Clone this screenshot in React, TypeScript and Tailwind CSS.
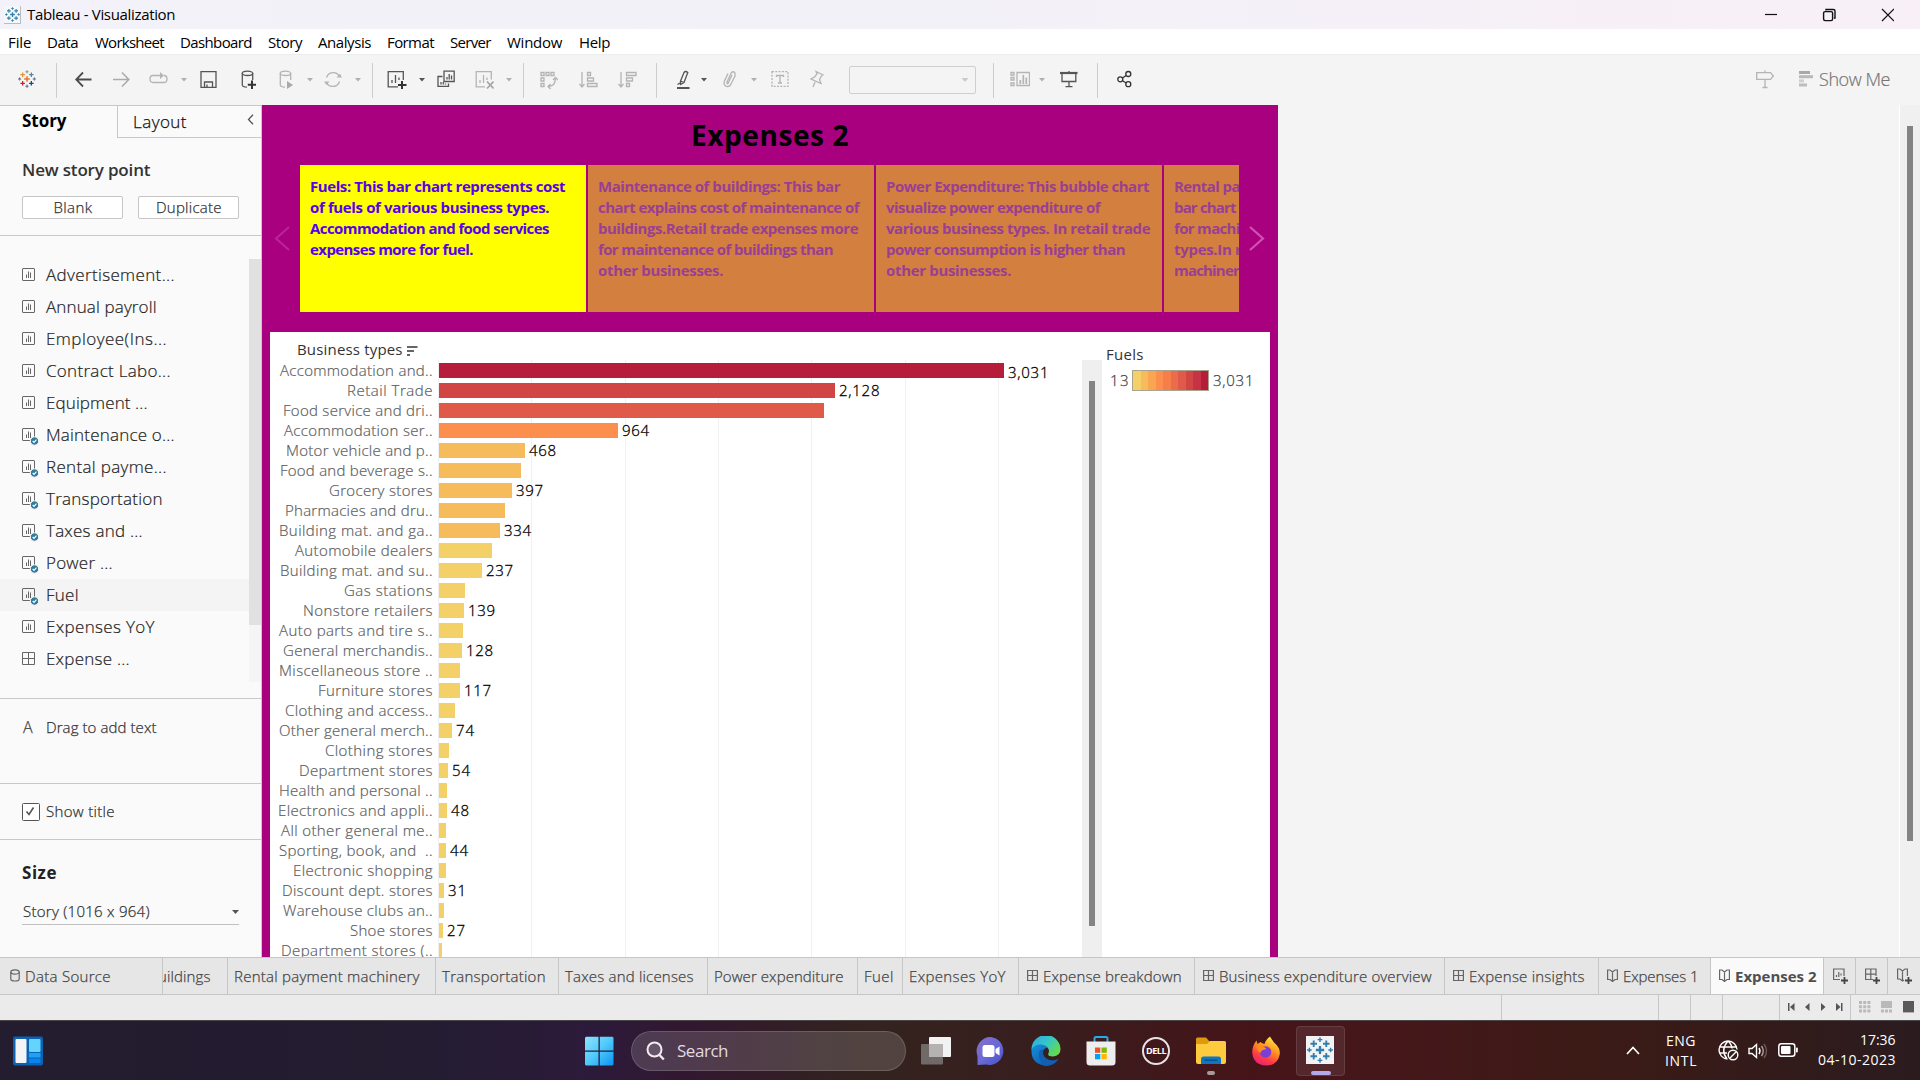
import { useLayoutEffect, useRef, useState } from 'react';
import type { ReactNode } from 'react';

/** Single line of text whose tracking is tuned so that it spans `w` pixels. */
function Fit({ w, children, className = '' }: { w: number; children: string; className?: string }) {
  const ref = useRef<HTMLSpanElement>(null);
  const [spacing, setSpacing] = useState<number | null>(null);
  useLayoutEffect(() => {
    if (ref.current && spacing === null) {
      const natural = ref.current.getBoundingClientRect().width;
      setSpacing((w + 0.5 - natural) / Math.max(1, children.length - 1));
    }
  }, [w, children, spacing]);
  return (
    <span
      ref={ref}
      className={`inline-block shrink-0 whitespace-pre ${className}`}
      style={spacing === null ? undefined : { letterSpacing: `${spacing}px`, marginRight: `${-spacing - 0.5}px` }}
    >
      {children}
    </span>
  );
}

function Ic({ w, c = '#b4b4b4', className = '', children }: { w: number; c?: string; className?: string; children: ReactNode }) {
  return (
    <svg width={w} height={25} viewBox={`0 0 ${w} 25`} fill="none" stroke={c} strokeWidth={1.3} className={`shrink-0 ${className}`}>
      {children}
    </svg>
  );
}

const Sep = ({ className }: { className: string }) => <div className={`h-[35px] w-px shrink-0 bg-[#cccccc] ${className}`} />;

function Caret({ className = '', dark = false }: { className?: string; dark?: boolean }) {
  return (
    <Ic w={6} className={className}>
      <path d="M0 11H6L3 14.5Z" fill={dark ? '#555' : '#b0b0b0'} stroke="none" />
    </Ic>
  );
}

const plus = (x: number, y: number, r: number) => `M${x - r} ${y}H${x + r}M${x} ${y - r}V${y + r}`;

function TableauMark({ mono = false }: { mono?: boolean }) {
  const k = (c: string) => (mono ? '#2f7fae' : c);
  return (
    <g fill="none" strokeWidth={1.7}>
      <path d={plus(12, 12, 3.8)} stroke={k('#e8762c')} strokeWidth={2.1} />
      <path d={plus(6.2, 6.2, 3)} stroke={k('#eb912b')} />
      <path d={plus(17.8, 6.2, 3)} stroke={k('#59879b')} />
      <path d={plus(6.2, 17.8, 3)} stroke={k('#c72035')} />
      <path d={plus(17.8, 17.8, 3)} stroke={k('#1f447e')} />
      <path d={plus(12, 2.4, 2.2)} stroke={k('#7199a6')} strokeWidth={1.3} />
      <path d={plus(12, 21.6, 2.2)} stroke={k('#5b6591')} strokeWidth={1.3} />
      <path d={plus(2.2, 12, 2.1)} stroke={k('#5c6692')} strokeWidth={1.3} />
      <path d={plus(21.8, 12, 2.1)} stroke={k('#5c6692')} strokeWidth={1.3} />
    </g>
  );
}

function TitleBar() {
  return (
    <div className="flex h-[29px] shrink-0 items-center bg-linear-to-r from-[#f3f1f9] via-[#f3f1f8] to-[#f8f0f6]">
      <div className="ml-1 flex h-[18px] w-[17px] items-center justify-center border-r border-b border-[#b9bcc2] bg-[#f4f6f8]">
        <svg width="15" height="15" viewBox="0 0 24 24"><TableauMark mono /></svg>
      </div>
      <Fit w={148} className="ml-[6px] text-[15px] text-black">Tableau - Visualization</Fit>
      <svg width="130" height="14" viewBox="0 0 130 14" fill="none" stroke="#111" strokeWidth="1.2" className="mr-[26px] ml-auto">
        <path d="M1 6.5H13" />
        <path d="M62 2.5V1.5H69.5Q71 1.5 71 3V10H70" strokeWidth="1.4" />
        <rect x="59.6" y="3.6" width="9" height="9" rx="1.5" strokeWidth="1.4" />
        <path d="M118 1L130 13M130 1L118 13" />
      </svg>
    </div>
  );
}

function MenuBar() {
  return (
    <div className="flex h-[25px] shrink-0 items-center gap-4 bg-white pt-[2px] pl-2 text-[15px] text-black">
      <Fit w={23}>File</Fit>
      <Fit w={31}>Data</Fit>
      <Fit w={69} className="ml-px">Worksheet</Fit>
      <Fit w={72}>Dashboard</Fit>
      <Fit w={34}>Story</Fit>
      <Fit w={53}>Analysis</Fit>
      <Fit w={47}>Format</Fit>
      <Fit w={41}>Server</Fit>
      <Fit w={55}>Window</Fit>
      <Fit w={31} className="ml-px">Help</Fit>
    </div>
  );
}

function Toolbar() {
  const dark = '#555';
  return (
    <div className="flex h-[51px] shrink-0 items-center border-t border-[#ececec] bg-[#f4f4f4] pb-[2px]">
      <svg width="18" height="18" viewBox="0 0 24 24" className="ml-[18px] shrink-0"><TableauMark /></svg>
      <Sep className="mt-[2px] ml-[20px]" />
      <Ic w={17} c="#4c4c4c" className="ml-[18px]"><path d="M16.5 12.5H1.5M8 5.5L1.2 12.5L8 19.5" strokeWidth={1.8} /></Ic>
      <Ic w={17} c="#ababab" className="ml-[21px]"><path d="M0 12.5H15.5M9 5.5L15.8 12.5L9 19.5" strokeWidth={1.6} /></Ic>
      <Ic w={19} className="ml-[19px]"><path d="M8 15.5H4Q1 15.5 1 12T4 8.5H13M15 15.5Q18 15.5 18 12T15 8.5M8 15.5H15" /><path d="M11 5L15 8.5L11 12Z" fill="#b4b4b4" stroke="none" /></Ic>
      <Caret className="ml-[13px]" />
      <Ic w={17} c={dark} className="ml-[13px]"><path d="M1 4.7H16V20.3H1ZM4.5 20V15H12.5V20M7 20V17.5" /></Ic>
      <Ic w={15} c={dark} className="ml-[24px]"><ellipse cx="6.5" cy="6.3" rx="5.2" ry="2.2" /><path d="M1.3 6V18Q1.5 20 6 20.2M11.7 6V13" /><path d="M11 13.5V22M6.8 17.8H15" stroke="#333" strokeWidth={2} /></Ic>
      <Ic w={14} className="ml-[23px]"><ellipse cx="6.5" cy="6.3" rx="5.2" ry="2.2" /><path d="M1.3 6V18Q1.5 20 6 20.2M11.7 6V13" /><path d="M8 14L14 18L8 22Z" fill="#aaa" stroke="none" /></Ic>
      <Caret className="ml-[14px]" />
      <Ic w={18} className="ml-[11px]"><path d="M2.5 10.5A7 7 0 0 1 15.5 9.5M15.5 14.5A7 7 0 0 1 2.5 15.5" /><path d="M12.5 10.5H18L16 6.8ZM0 14.5H5.5L2.5 18Z" fill="#b4b4b4" stroke="none" /></Ic>
      <Caret className="ml-[13px]" />
      <Sep className="mt-[2px] ml-[11px]" />
      <Ic w={20} c={dark} className="ml-[14px]"><path d="M11 19.8H1.2V4.6H16.3V13M5 16V13M8.5 16V8M12 13V10.5" /><path d="M15 14V22M11 18H19.5" stroke="#333" strokeWidth={2} /></Ic>
      <Caret dark className="ml-[12px]" />
      <Ic w={18} c={dark} className="ml-[12px]"><path d="M7 4.2H17.2V14.5H7ZM10 12.5V10M12.2 12.5V7M14.5 12.5V8.5M5.5 9.5H1V19.3H11.5V16.5M4 17.5V15M6.3 17.5V15M8.5 17.5V16.5" /></Ic>
      <Ic w={19} className="ml-[20px]"><path d="M10 19.8H1.2V4.6H16.3V12.5M5 16V13M8.5 16V8M12 13V10.5" /><path d="M12 14.5L18.5 21.5M18.5 14.5L12 21.5" stroke="#a4a4a4" strokeWidth={1.7} /></Ic>
      <Caret className="ml-[12px]" />
      <Sep className="mt-[2px] ml-[11px]" />
      <Ic w={18} className="ml-[16px]"><path d="M1 5.5H4V8.5H1ZM6 5.5H9V8.5H6ZM11 5.5H14V8.5H11ZM1 11H4V14H1ZM1 16.5H4V19.5H1ZM8 19.5Q15.5 19.5 15.5 11M10.5 17L8 19.5L10.5 22M13 13L15.5 10.5L18 13" /></Ic>
      <Ic w={19} className="ml-[21px]"><path d="M3 5V20M.5 17L3 20L5.5 17M8.5 5.5H11.5V8.5H8.5ZM8.5 11H14.5V14H8.5ZM8.5 16.5H18V19.5H8.5Z" /></Ic>
      <Ic w={19} className="ml-[20px]"><path d="M3 5V20M.5 17L3 20L5.5 17M8.5 5.5H18V8.5H8.5ZM8.5 11H14.5V14H8.5ZM8.5 16.5H11.5V19.5H8.5Z" /></Ic>
      <Sep className="mt-[2px] ml-[19px]" />
      <Ic w={13} c={dark} className="ml-[20px]"><path d="M3.5 14L7 5.5Q8.5 3.5 10.8 5.5L7 15.5L3.5 17.5ZM3.5 14L7 15.5" /><path d="M.5 17.5L3 16" /><path d="M0 21H12.5" strokeWidth={2} /></Ic>
      <Caret dark className="ml-[11px]" />
      <Ic w={13} className="ml-[16px]"><path d="M9 8L5 16.5Q3.8 17.5 4 15L8.2 6Q10.5 3.5 12 6V9L7.5 18Q5 21 2 18.5Q.5 17 1.5 14L5 6.5" /></Ic>
      <Caret className="ml-[15px]" />
      <Ic w={18} className="ml-[14px]"><rect x="1" y="4.7" width="16" height="14.6" strokeDasharray="2 1.3" /><path d="M5.5 10V8.5H12.5V10M9 8.5V16M7 16H11" /></Ic>
      <Ic w={14} className="ml-[21px]"><path d="M6 4.5L13 8L11.5 9L9.5 12.5L11 16.5L1 12L4.5 10L7 7L6 4.5ZM5 15L3 20" /></Ic>
      <div className="mt-px ml-[25px] flex h-7 w-[127px] shrink-0 items-center justify-end rounded-[2px] border border-[#cfcfcf] pr-[6px]">
        <Ic w={8}><path d="M.5 11H7.5L4 15Z" fill="#cacaca" stroke="none" /></Ic>
      </div>
      <Sep className="mt-[2px] ml-[17px]" />
      <Ic w={20} className="ml-[16px]"><path d="M1 5.5H4V8H1ZM1 10.5H4V13H1ZM1 16H4V18.5H1ZM7 5.5H19.5V18.5H7Z" /><path d="M10.3 17V13M13.3 17V8M16.3 17V10.5" strokeWidth={1.7} /></Ic>
      <Caret className="ml-[9px]" />
      <Ic w={18} c={dark} className="ml-[15px]"><path d="M0 6H17.5" strokeWidth={2.2} /><path d="M2 7V14.5H15.8V7M9 4V5M9 14.5V19.5M5.5 19.7H12.5" /></Ic>
      <Sep className="mt-[2px] ml-[19px]" />
      <Ic w={15} c="#333" className="ml-[19px]"><circle cx="3.3" cy="12.3" r="2.5" /><circle cx="11.3" cy="7" r="2.5" /><circle cx="11.3" cy="17.2" r="2.5" /><path d="M5.5 11L9.2 8.5M5.5 13.7L9.2 16" /></Ic>
      <Ic w={18} className="ml-[624px]"><path d="M.7 5.7H14.5L17.3 9L14.5 12.3H.7ZM9 3.5V5.5M9 12.5V20.5M6.5 20.5H11.5" /></Ic>
      <svg width="14" height="16" className="ml-[25px] shrink-0">
        <path d="M0 0H11V3H0Z" fill="#a9a9a9" /><path d="M0 4.2H14V7.2H0Z" fill="#b9b9b9" /><path d="M0 8.4H5V11.4H0Z" fill="#cfcfcf" /><path d="M0 12.5H8V15.5H0Z" fill="#bdbdbd" />
      </svg>
      <Fit w={71} className="ml-[6px] text-[18px] font-light text-[#757575] [-webkit-text-stroke:0.2px]">Show Me</Fit>
    </div>
  );
}

const sheets: { name: string; w: number; kind: 'sheet' | 'used' | 'dash'; active?: boolean }[] = [
  { name: 'Advertisement...', w: 128, kind: 'sheet' },
  { name: 'Annual payroll', w: 110, kind: 'sheet' },
  { name: 'Employee(Ins...', w: 120, kind: 'sheet' },
  { name: 'Contract Labo...', w: 124, kind: 'sheet' },
  { name: 'Equipment ...', w: 101, kind: 'sheet' },
  { name: 'Maintenance o...', w: 128, kind: 'used' },
  { name: 'Rental payme...', w: 120, kind: 'used' },
  { name: 'Transportation', w: 116, kind: 'used' },
  { name: 'Taxes and ...', w: 96, kind: 'used' },
  { name: 'Power ...', w: 66, kind: 'used' },
  { name: 'Fuel', w: 32, kind: 'used', active: true },
  { name: 'Expenses YoY', w: 108, kind: 'sheet' },
  { name: 'Expense ...', w: 83, kind: 'dash' },
];

function SheetIcon({ kind }: { kind: 'sheet' | 'used' | 'dash' }) {
  return (
    <svg width="17" height="18" viewBox="0 0 17 18" fill="none" stroke="#666" className="mt-[3px] ml-[22px] shrink-0">
      {kind === 'dash' ? (
        <path d="M.5 .5H12.5V12.5H.5ZM6.5 .5V12.5M.5 6.5H12.5" />
      ) : (
        <>
          <rect x=".5" y=".5" width="12" height="12" rx=".5" />
          <path d="M4.5 10V6.5M6.5 10V3.5M8.5 10V4.5" />
        </>
      )}
      {kind === 'used' && (
        <>
          <circle cx="12.5" cy="13" r="4.2" fill="#35799b" stroke="#fafafa" />
          <path d="M10.7 13L12 14.3L14.5 11.7" stroke="#fff" strokeWidth="1.2" />
        </>
      )}
    </svg>
  );
}

function SidePanel() {
  return (
    <div className="flex w-[262px] shrink-0 flex-col overflow-hidden border-t border-r border-[#c8c8c8] bg-[#fafafa] text-[#333]">
      <div className="flex h-8 shrink-0">
        <div className="w-[117px] pt-[2px] pl-[22px] leading-[26px]">
          <Fit w={44} className="text-[17px] font-bold text-black">Story</Fit>
        </div>
        <div className="flex flex-1 items-center border-b border-l border-[#c8c8c8] pl-[15px]">
          <Fit w={53} className="text-[17px] font-light text-[#111] [-webkit-text-stroke:0.25px]">Layout</Fit>
          <svg width="7" height="11" className="mr-[7px] mb-1 ml-auto" fill="none" stroke="#555" strokeWidth="1.3"><path d="M6 .8L1.5 5.5L6 10.2" /></svg>
        </div>
      </div>
      <div className="h-[98px] shrink-0 border-b border-[#c8c8c8] pt-[19px] pl-[22px]">
        <Fit w={128} className="text-[17px] leading-[26px] font-semibold">New story point</Fit>
        <div className="mt-[13px] flex gap-[15px] text-[15px] font-light text-[#333] [-webkit-text-stroke:0.25px]">
          <div className="flex h-[23px] w-[101px] items-center justify-center rounded-[2px] border border-[#c6c6c6] bg-white"><Fit w={38}>Blank</Fit></div>
          <div className="flex h-[23px] w-[101px] items-center justify-center rounded-[2px] border border-[#c6c6c6] bg-white"><Fit w={65}>Duplicate</Fit></div>
        </div>
      </div>
      <div className="flex h-[463px] shrink-0 border-b border-[#c8c8c8] pt-[23px]">
        <div className="flex-1">
          {sheets.map((s) => (
            <div key={s.name} className={s.active ? 'flex h-8 items-center bg-[#f4f4f4]' : 'flex h-8 items-center'}>
              <SheetIcon kind={s.kind} />
              <Fit w={s.w} className="ml-[7px] text-[17px] font-light text-[#222] [-webkit-text-stroke:0.2px]">{s.name}</Fit>
            </div>
          ))}
        </div>
        <div className="h-[423px] w-3 bg-[#f5f5f5]"><div className="h-[366px] bg-[#e1e1e1]" /></div>
      </div>
      <div className="flex h-[85px] shrink-0 items-start border-b border-[#c8c8c8] pt-[17px] pl-[22px] text-[15px] leading-[23px] font-light [-webkit-text-stroke:0.25px]">
        <span className="w-6 pl-px text-[16px] leading-[22px] text-[#444]">A</span>
        <Fit w={110}>Drag to add text</Fit>
      </div>
      <div className="flex h-14 shrink-0 items-center border-b border-[#c8c8c8] pl-[22px] text-[15px] font-light [-webkit-text-stroke:0.25px]">
        <svg width="18" height="18" fill="#fff" stroke="#555" className="mr-[6px]"><rect x=".5" y=".5" width="17" height="17" rx="1" /><path d="M4.5 8.5L7 11.5L11.5 4.5" fill="none" strokeWidth="1.6" /></svg>
        <Fit w={68}>Show title</Fit>
      </div>
      <div className="pt-[20px] pl-[22px]">
        <Fit w={34} className="text-[17px] leading-[26px] font-bold text-[#222]">Size</Fit>
        <div className="mt-[12px] flex h-[27px] w-[217px] items-center justify-between border-b border-[#c0c0c0] text-[15px] font-light [-webkit-text-stroke:0.25px]">
          <Fit w={126} className="ml-px">Story (1016 x 964)</Fit>
          <svg width="7" height="4" className="mt-px"><path d="M0 0H7L3.5 4Z" fill="#555" /></svg>
        </div>
      </div>
    </div>
  );
}

const points: { active?: boolean; lines: [string, number][] }[] = [
  { active: true, lines: [['Fuels: This bar chart represents cost', 255], ['of fuels of various business types.', 239], ['Accommodation and food services', 239], ['expenses more for fuel.', 163]] },
  { lines: [['Maintenance of buildings: This bar', 242], ['chart explains cost of maintenance of', 261], ['buildings.Retail trade expenses more', 260], ['for maintenance of buildings than', 235], ['other businesses.', 125]] },
  { lines: [['Power Expenditure: This bubble chart', 263], ['visualize power expenditure of', 214], ['various business types. In retail trade', 264], ['power consumption is higher than', 239], ['other businesses.', 125]] },
  { lines: [['Rental pay', 74], ['bar chart', 62], ['for machin', 75], ['types.In re', 76], ['machinery', 73]] },
];

function Navigator() {
  return (
    <div className="flex h-[147px] items-center">
      <svg width="38" height="26" fill="none" stroke="#c435a2" strokeWidth="2" className="mb-[2px] shrink-0 opacity-70"><path d="M27 2L14 13.5L27 25" /></svg>
      <div className="flex h-full w-[939px] shrink-0 gap-[2px] overflow-hidden">
        {points.map((p) => (
          <div
            key={p.lines[0][0]}
            className={
              p.active
                ? 'flex w-[286px] shrink-0 flex-col bg-[#ffff00] pt-[11px] pl-[10px] text-[15px] leading-[21px] font-bold text-[#5500ee]'
                : 'flex w-[286px] shrink-0 flex-col bg-[#d37f3f] pt-[11px] pl-[10px] text-[15px] leading-[21px] font-bold text-[#983f94]'
            }
          >
            {p.lines.map(([t, w]) => (
              <div key={t} className="h-[21px]"><Fit w={w}>{t}</Fit></div>
            ))}
          </div>
        ))}
      </div>
      <svg width="38" height="26" fill="none" stroke="#cf52b4" strokeWidth="2.2" className="mb-[2px] shrink-0"><path d="M11 2L24 13.5L11 25" /></svg>
    </div>
  );
}

const Y = '#f3d168';
const O = '#f6bb5b';
const rows: [string, number, number, string, string?][] = [
  ['Accommodation and..', 152, 565, '#b61d3b', '3,031'],
  ['Retail Trade', 85, 396, '#d24545', '2,128'],
  ['Food service and dri..', 149, 385, '#e05a49'],
  ['Accommodation ser..', 148, 179, '#fc8f4e', '964'],
  ['Motor vehicle and p..', 146, 86, O, '468'],
  ['Food and beverage s..', 152, 82, O],
  ['Grocery stores', 103, 73, O, '397'],
  ['Pharmacies and dru..', 147, 66, O],
  ['Building mat. and ga..', 153, 61, O, '334'],
  ['Automobile dealers', 137, 53, Y],
  ['Building mat. and su..', 152, 43, Y, '237'],
  ['Gas stations', 88, 26, Y],
  ['Nonstore retailers', 129, 25, Y, '139'],
  ['Auto parts and tire s..', 153, 24, Y],
  ['General merchandis..', 149, 23, Y, '128'],
  ['Miscellaneous store ..', 153, 21, Y],
  ['Furniture stores', 114, 21, Y, '117'],
  ['Clothing and access..', 147, 16, Y],
  ['Other general merch..', 153, 13, Y, '74'],
  ['Clothing stores', 107, 10, Y],
  ['Department stores', 133, 9, Y, '54'],
  ['Health and personal ..', 153, 8, Y],
  ['Electronics and appli..', 154, 8, Y, '48'],
  ['All other general me..', 151, 7, Y],
  ['Sporting, book, and  ..', 153, 7, Y, '44'],
  ['Electronic shopping', 139, 7, Y],
  ['Discount dept. stores', 150, 5, Y, '31'],
  ['Warehouse clubs an..', 149, 5, Y],
  ['Shoe stores', 82, 4, Y, '27'],
  ['Department stores (..', 151, 3, Y],
];
const valueWidth: Record<number, number> = { 2: 17.5, 3: 26.5, 5: 40 };
const ramp = ['#f3d168', '#f6bb5b', '#faa552', '#fc8f4e', '#f57e4b', '#ec6b4a', '#e05a49', '#d24545', '#c53344', '#b61d3b'];

function Viz() {
  return (
    <div className="flex h-[625px] overflow-hidden bg-white">
      <div className="w-[812px] shrink-0">
        <div className="flex h-[28px] items-center pt-[6px] pl-[27px] text-[15px] leading-5 text-[#333]">
          <Fit w={105}>Business types</Fit>
          <svg width="11" height="10" className="mt-[3px] ml-[5px]" fill="#666"><path d="M0 0H10.5V2H0ZM0 4H7V6H0ZM0 8H3V10H0Z" /></svg>
        </div>
        <div className="relative h-[597px]">
          <div className="absolute inset-y-0 left-[168px] flex">
            {[93, 94, 93, 93, 94, 93, 1].map((w, i) => (
              <div key={i} className="shrink-0 border-l border-[#f0f0f0]" style={{ width: w }} />
            ))}
          </div>
          <div className="relative">
            {rows.map(([label, lw, bar, color, value]) => (
              <div key={label} className="flex h-5 items-center text-[15px] leading-5 font-light">
                <div className="flex w-[162px] shrink-0 justify-end text-[#5c5c5c] [-webkit-text-stroke:0.2px]"><Fit w={lw}>{label}</Fit></div>
                <div className="ml-[7px] h-[15px] shrink-0" style={{ width: bar, backgroundColor: color }} />
                {value && (
                  <Fit
                    w={valueWidth[value.length]}
                    className={value === '3,031' ? 'mt-1 ml-[4px] text-black [-webkit-text-stroke:0.3px]' : 'ml-[4px] text-black [-webkit-text-stroke:0.3px]'}
                  >
                    {value}
                  </Fit>
                )}
              </div>
            ))}
          </div>
        </div>
      </div>
      <div className="mt-[28px] w-5 bg-[#efefef] pt-[21px] pl-[7px]"><div className="h-[545px] w-[6px] bg-[#848484]" /></div>
      <div className="pt-[12px] pl-1 text-[15px] leading-5">
        <Fit w={37} className="text-[#333]">Fuels</Fit>
        <div className="mt-[6px] ml-1 flex h-[21px] items-center font-light text-[#444] [-webkit-text-stroke:0.25px]">
          <Fit w={18} className="-mt-px">13</Fit>
          <div className="mx-1 flex h-[21px] w-[77px] border border-[#a9a48f]">
            {ramp.map((c) => <div key={c} className="flex-1" style={{ backgroundColor: c }} />)}
          </div>
          <Fit w={40} className="-mt-px">3,031</Fit>
        </div>
      </div>
    </div>
  );
}

function Workspace() {
  return (
    <div className="flex min-w-0 flex-1 bg-[#f4f4f4]">
      <div className="w-[1016px] shrink-0 bg-[#a9007f]">
        <div className="flex h-[60px] items-center pl-[429px]">
          <Fit w={157} className="text-[28px] leading-[38px] font-bold text-black">Expenses 2</Fit>
        </div>
        <Navigator />
        <div className="mt-5 px-2"><Viz /></div>
      </div>
      <div className="ml-auto w-[21px] border-l border-white bg-[#f0f0f0] pt-[21px] pl-[7px]"><div className="h-[715px] w-[6px] bg-[#848484]" /></div>
    </div>
  );
}

const DashIcon = () => (
  <svg width="11" height="13" fill="none" stroke="#666" strokeWidth="1.2" className="mr-[5px] mb-[2px] shrink-0"><path d="M.6 1.5H10.4V11.5H.6ZM5.5 1.5V11.5M.6 6.5H10.4" /></svg>
);
const StoryIcon = () => (
  <svg width="11" height="13" fill="none" stroke="#666" strokeWidth="1.2" className="mr-[5px] mb-[2px] shrink-0"><path d="M.6 1H3L5.5 3L8 1H10.4V10.5H8L5.5 12.5L3 10.5H.6ZM5.5 3V12.5" /></svg>
);

const Tab = ({ className, children }: { className: string; children: ReactNode }) => (
  <div className={`flex shrink-0 items-center overflow-hidden border-r border-[#c6c6c6] ${className}`}>{children}</div>
);

function SheetTabs() {
  return (
    <div className="flex h-[38px] shrink-0 border-y border-[#c6c6c6] bg-[#e6e6e6] text-[15px] font-light text-[#444] [-webkit-text-stroke:0.25px]">
      <Tab className="w-[163px] pl-[10px]">
        <svg width="10" height="13" fill="none" stroke="#666" strokeWidth="1.2" className="mr-[5px] mb-[2px] shrink-0"><ellipse cx="5" cy="3" rx="4.2" ry="2.2" /><path d="M.8 3V10Q.8 12 5 12T9.2 10V3" /></svg>
        <Fit w={85}>Data Source</Fit>
      </Tab>
      <Tab className="w-[65px]"><Fit w={52} className="-ml-[5px]">uildings</Fit></Tab>
      <Tab className="w-[208px] pl-[6px]"><Fit w={185}>Rental payment machinery</Fit></Tab>
      <Tab className="w-[123px] pl-[6px]"><Fit w={103}>Transportation</Fit></Tab>
      <Tab className="w-[149px] pl-[6px]"><Fit w={128}>Taxes and licenses</Fit></Tab>
      <Tab className="w-[150px] pl-[6px]"><Fit w={129}>Power expenditure</Fit></Tab>
      <Tab className="w-[45px] pl-[6px]"><Fit w={29}>Fuel</Fit></Tab>
      <Tab className="w-[116px] pl-[6px]"><Fit w={96}>Expenses YoY</Fit></Tab>
      <Tab className="w-[176px] pl-[8px]"><DashIcon /><Fit w={138}>Expense breakdown</Fit></Tab>
      <Tab className="w-[250px] pl-[8px]"><DashIcon /><Fit w={212}>Business expenditure overview</Fit></Tab>
      <Tab className="w-[154px] pl-[8px]"><DashIcon /><Fit w={115}>Expense insights</Fit></Tab>
      <Tab className="w-[112px] pl-[8px]"><StoryIcon /><Fit w={75}>Expenses 1</Fit></Tab>
      <Tab className="w-[113px] bg-[#fafafa] pl-[8px]"><StoryIcon /><Fit w={81} className="font-bold text-[#4f4f4f] [-webkit-text-stroke:0px]">Expenses 2</Fit></Tab>
      <Tab className="w-8 pl-[9px]">
        <svg width="16" height="17" fill="none" stroke="#666" strokeWidth="1.2"><path d="M7 11.5H.6V1H11V8M3.5 9V7M5.8 9V4M8 7.5V5.5" /><path d="M11.5 9V16M8 12.5H15" stroke="#444" strokeWidth="1.8" /></svg>
      </Tab>
      <Tab className="w-8 pl-[9px]">
        <svg width="16" height="17" fill="none" stroke="#666" strokeWidth="1.2"><path d="M8 11.5H.6V1H11V8M5.8 1V11.5M.6 6.2H11" /><path d="M11.5 9V16M8 12.5H15" stroke="#444" strokeWidth="1.8" /></svg>
      </Tab>
      <Tab className="w-[33px] pl-[9px]">
        <svg width="16" height="17" fill="none" stroke="#666" strokeWidth="1.2"><path d="M7 12L5.5 13L3 11H.6V1H3L5.5 3L8 1H10.4V8M5.5 3V12.5" /><path d="M11.5 9V16M8 12.5H15" stroke="#444" strokeWidth="1.8" /></svg>
      </Tab>
    </div>
  );
}

function StatusBar() {
  return (
    <div className="flex h-[25px] shrink-0 bg-[#ebebeb]">
      <div className="w-[1502px] border-r border-[#c6c6c6]" />
      <div className="w-[157px] border-r border-[#c6c6c6]" />
      <div className="w-8 border-r border-[#c6c6c6]" />
      <div className="w-8 border-r border-[#c6c6c6]" />
      <div className="w-[57px] border-r border-[#c6c6c6]" />
      <div className="flex w-[71px] items-center border-r border-[#c6c6c6] pb-[2px] pl-[8px]">
        <svg width="58" height="8" fill="#555"><path d="M0 0H1.5V8H0ZM6.5 0V8L2 4ZM21.5 0V8L17 4ZM33 0V8L37.5 4ZM48 0V8L52.5 4ZM53 0H54.5V8H53Z" /></svg>
      </div>
      <svg width="56" height="12" className="mt-[6px] ml-[8px]" fill="#b9b9b9">
        <path d="M0 0H3V3H0ZM4.2 0H7.2V3H4.2ZM8.4 0H11.4V3H8.4ZM0 4.2H3V7.2H0ZM4.2 4.2H7.2V7.2H4.2ZM8.4 4.2H11.4V7.2H8.4ZM0 8.4H3V11.4H0ZM4.2 8.4H7.2V11.4H4.2ZM8.4 8.4H11.4V11.4H8.4ZM22 0H33V7H22ZM22 8.4H25V11.4H22ZM26 8.4H29V11.4H26ZM30 8.4H33V11.4H30Z" />
        <path d="M44 0H55V11.4H44Z" fill="#5a5a5a" />
      </svg>
    </div>
  );
}

function Taskbar() {
  return (
    <div className="flex h-[60px] shrink-0 items-center border-t border-[#4a4648] bg-[linear-gradient(90deg,#241c2f_0%,#231d31_22%,#2c1a3a_31%,#32182f_36%,#33231f_45%,#371f1e_53%,#451419_65%,#45171a_73%,#3c1a16_82%,#331b1a_92%,#2b1b20_100%)] text-white">
      <svg width="30" height="30" viewBox="0 0 30 30" className="ml-[13px] shrink-0">
        <rect width="30" height="29" y=".5" rx="2" fill="#0b62b4" />
        <rect x="2.5" y="3" width="11" height="24" rx="1" fill="#f4f4f6" />
        <rect x="16" y="3" width="11.5" height="13" rx="1" fill="#63d5fd" /><rect x="16" y="17" width="11.5" height="4.5" fill="#1ea2f6" /><rect x="16" y="22.5" width="11.5" height="4.5" rx="1" fill="#0a84ea" />
      </svg>
      <svg width="30" height="30" viewBox="0 0 30 30" className="ml-[541px] shrink-0">
        <defs><linearGradient id="win" x1="0" y1="0" x2="1" y2="1"><stop stopColor="#8fe3fd" /><stop offset=".5" stopColor="#4fc9fb" /><stop offset="1" stopColor="#0a93f5" /></linearGradient></defs>
        <path d="M2 .8H14.5V14.5H1V1.8ZM15.8 .8H28.5L29.5 1.8V14.5H15.8ZM1 15.8H14.5V29.5H2L1 28.5ZM15.8 15.8H29.5V28.5L28.5 29.5H15.8Z" fill="url(#win)" />
      </svg>
      <div className="ml-[17px] flex h-10 w-[275px] shrink-0 items-center rounded-full border border-white/15 bg-white/15 pl-[14px]">
        <svg width="19" height="20" fill="none" stroke="#f0ecef" strokeWidth="2"><circle cx="8.5" cy="8.5" r="7" fill="#ffffff22" /><path d="M13.5 14L17.8 18.5" strokeWidth="2.4" /></svg>
        <Fit w={51} className="ml-[12px] text-[17px] text-[#e2dbe0]">Search</Fit>
      </div>
      <svg width="30" height="30" className="ml-[15px] shrink-0"><rect x="0" y="8" width="22" height="20.5" rx="1" fill="#6f6a68" /><rect x="8" y="1" width="22" height="20" rx="1" fill="#f2f2f2" /><rect x="8" y="8" width="14" height="13" fill="#b5b2b1" /></svg>
      <svg width="30" height="30" viewBox="0 0 30 30" className="ml-[25px] shrink-0">
        <defs><linearGradient id="chat" x1="0" y1="0" x2="1" y2="1"><stop stopColor="#8c6fc4" /><stop offset=".5" stopColor="#6a6ad8" /><stop offset="1" stopColor="#4a52c4" /></linearGradient></defs>
        <path d="M15 1A14 14 0 1 1 10 28.5L1.5 29V20A14 14 0 0 1 15 1Z" fill="url(#chat)" />
        <rect x="6.5" y="9" width="12" height="12" rx="2.5" fill="#fff" /><path d="M19.5 13L23.5 10.5V19.5L19.5 17Z" fill="#fff" />
      </svg>
      <svg width="30" height="30" viewBox="0 0 30 30" className="ml-[25px] shrink-0">
        <defs>
          <linearGradient id="edgeA" x1="0" y1="0" x2="1" y2=".6"><stop stopColor="#2ba8e8" /><stop offset=".55" stopColor="#35c6c8" /><stop offset="1" stopColor="#62dc4e" /></linearGradient>
          <linearGradient id="edgeB" x1="0" y1="0" x2="1" y2="1"><stop stopColor="#1590dc" /><stop offset="1" stopColor="#0c4f9f" /></linearGradient>
        </defs>
        <path d="M.5 14A14.5 14.5 0 0 1 29.5 13Q29.5 20 22 20.5Q16 20.5 17.5 17Q19 14 16 11Q8 6 .5 14Z" fill="url(#edgeA)" />
        <path d="M.5 14Q3 8.5 9.5 8.5Q14.5 8.8 16.5 11.5Q10.5 13 12 19Q14.5 26 24 24.5Q26.5 23.8 27.5 23Q22 30.5 14 29.7Q0 27.5 .5 14Z" fill="url(#edgeB)" />
        <path d="M9 14Q5.5 22 13 29.5Q22 31 27.5 23Q21 26 15.5 22.5Q10.5 19 12.5 13.5Z" fill="#0f5fb3" />
      </svg>
      <svg width="30" height="32" viewBox="0 0 30 32" className="ml-[25px] shrink-0">
        <path d="M8.5 8V3.5Q8.5 2 10 2H20Q21.5 2 21.5 3.5V8" fill="none" stroke="#2aa8e8" strokeWidth="2" />
        <path d="M.5 6.5H29.5V27Q29.5 30.5 26 30.5H4Q.5 30.5 .5 27Z" fill="#eeeeee" />
        <path d="M9 12.5H14.3V17.8H9Z" fill="#f25022" /><path d="M15.5 12.5H20.8V17.8H15.5Z" fill="#7fba00" /><path d="M9 19H14.3V24.3H9Z" fill="#00a4ef" /><path d="M15.5 19H20.8V24.3H15.5Z" fill="#ffb900" />
      </svg>
      <div className="ml-[26px] flex h-7 w-7 shrink-0 items-center justify-center rounded-full border-2 border-[#e8e3e3]"><Fit w={20} className="text-[9px] font-bold">DELL</Fit></div>
      <div className="relative ml-[26px] shrink-0">
        <svg width="30" height="28" viewBox="0 0 30 28">
          <path d="M0 2Q0 .5 1.5 .5H10L13.5 4.5H28V12H0Z" fill="#dc9a0c" />
          <path d="M0 7H11L14 4H28.5Q30 4 30 5.5V25Q30 27 28 27H2Q0 27 0 25Z" fill="#fdcb3d" />
          <path d="M5 27V22Q5 19.5 7.5 19.5H22.5Q25 19.5 25 22V27Z" fill="#0f76c4" /><path d="M8.5 23.2H21.5" stroke="#0a4f8c" strokeWidth="1.4" />
        </svg>
        <div className="absolute top-[34px] left-[11px] h-1 w-2 rounded-full bg-[#a89a9a]" />
      </div>
      <svg width="28" height="30" viewBox="0 0 28 30" className="ml-[26px] shrink-0">
        <defs>
          <linearGradient id="ff" x1=".8" y1="0" x2=".3" y2="1"><stop stopColor="#fff14a" /><stop offset=".4" stopColor="#ff9a1f" /><stop offset=".75" stopColor="#ff3b45" /><stop offset="1" stopColor="#e8207a" /></linearGradient>
        </defs>
        <path d="M18 .5Q19.5 3 22 6.5Q28.5 12 27.8 18Q26 29.5 14 29.5Q1.5 29 .3 17Q0 10 4.5 4.5L5.5 8L8.5 6Q10 7.5 12.5 8Q14 3 18 .5Z" fill="url(#ff)" />
        <circle cx="13.5" cy="16" r="5.8" fill="#7a3fd8" /><path d="M4 11Q8 8.5 13 11.5Q16 13 11 14Q9 14.5 8.5 17Q5 15 4 11Z" fill="#ff8a1d" />
      </svg>
      <div className="relative ml-4 flex h-[50px] w-[49px] shrink-0 items-center justify-center rounded-[4px] border border-white/10 bg-white/8">
        <div className="mr-px mb-px flex h-7 w-7 items-center justify-center bg-[#f3f3f3]"><svg width="26" height="26" viewBox="0 0 24 24"><TableauMark mono /></svg></div>
        <div className="absolute bottom-0 left-[14px] h-1 w-5 rounded-full bg-[#b3a9ea]" />
      </div>
      <svg width="14" height="9" fill="none" stroke="#fff" strokeWidth="1.7" className="ml-[281px] shrink-0"><path d="M1 8L7 1.5L13 8" /></svg>
      <div className="ml-[25px] flex w-[31px] shrink-0 flex-col items-center text-[14px] leading-5"><Fit w={29}>ENG</Fit><Fit w={31}>INTL</Fit></div>
      <svg width="21" height="21" viewBox="0 0 21 21" fill="none" stroke="#fff" strokeWidth="1.4" className="ml-[22px] shrink-0">
        <path d="M9.5 19A9 9 0 1 1 19 9.5M1.5 7H18M1.5 13H9M10 1Q2 10 9 19M10 1Q14 5 14 8.5" /><circle cx="15" cy="15" r="4.8" /><path d="M11.8 18.2L18.2 11.8" />
      </svg>
      <svg width="20" height="18" viewBox="0 0 20 18" fill="none" stroke="#fff" strokeWidth="1.4" className="ml-[9px] shrink-0"><path d="M1 6.5H4L8.5 2.5V15.5L4 11.5H1Z" /><path d="M11 6Q13 9 11 12" /><path d="M13.5 4Q17 9 13.5 14" stroke="#b09c9c" /><path d="M16 2Q21 9 16 16" stroke="#6f5656" /></svg>
      <svg width="20" height="14" viewBox="0 0 20 14" className="mb-[2px] ml-[10px] shrink-0"><rect x=".8" y=".8" width="16" height="12.4" rx="2.5" fill="none" stroke="#fff" strokeWidth="1.5" /><rect x="3" y="3" width="9.5" height="8" rx="1" fill="#fff" /><rect x="18" y="4.5" width="1.8" height="5" rx=".8" fill="#fff" /></svg>
      <div className="mb-[2px] ml-5 flex w-[77px] shrink-0 flex-col items-end text-[14px] leading-5"><Fit w={35}>17:36</Fit><Fit w={77}>04-10-2023</Fit></div>
    </div>
  );
}

export default function App() {
  return (
    <div className="flex h-[1080px] w-[1920px] flex-col overflow-hidden font-['Open_Sans','Noto_Sans',sans-serif]">
      <TitleBar />
      <MenuBar />
      <Toolbar />
      <div className="flex h-[852px] shrink-0">
        <SidePanel />
        <Workspace />
      </div>
      <SheetTabs />
      <StatusBar />
      <Taskbar />
    </div>
  );
}
